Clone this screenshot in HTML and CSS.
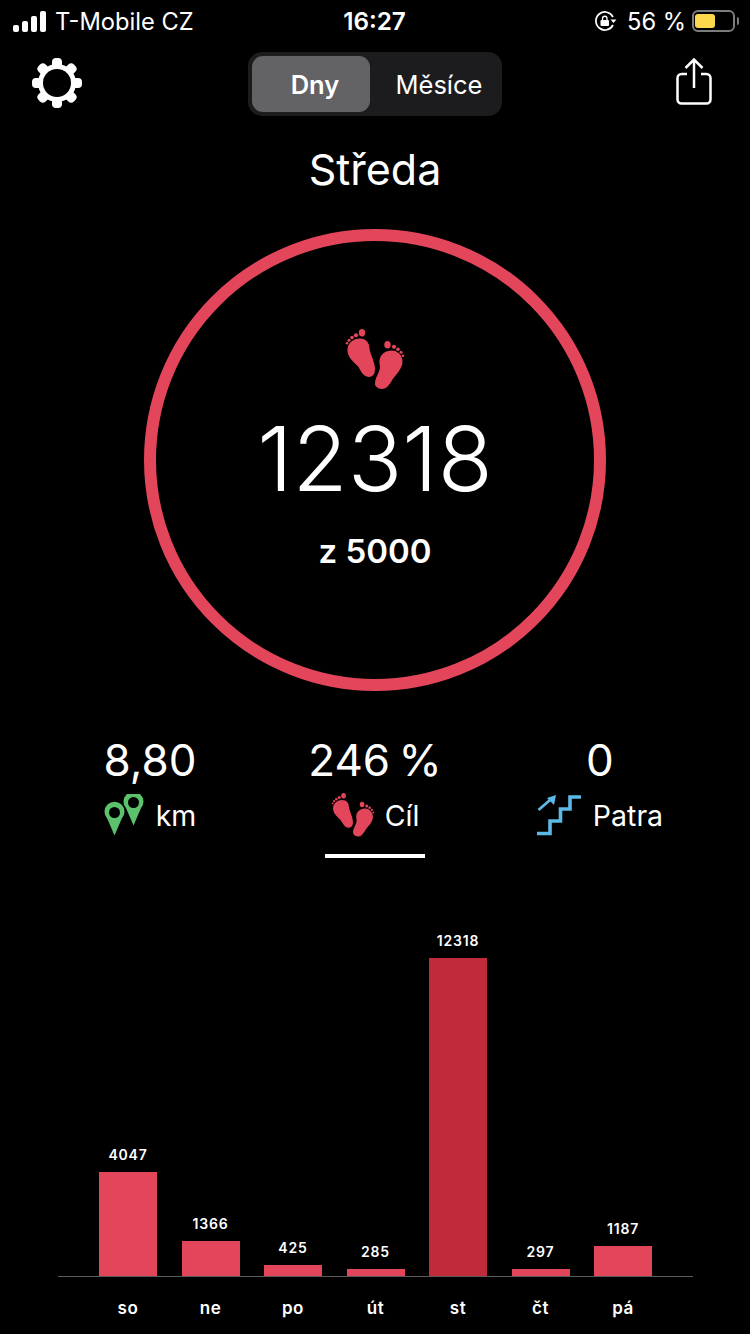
FILE: index.html
```html
<!DOCTYPE html>
<html lang="cs">
<head>
    <meta charset="UTF-8">
    <meta name="viewport" content="width=device-width, initial-scale=1.0">
    <title>Kroky</title>
    <link rel="stylesheet" href="styles.css">
</head>
<body>
    <svg class="defs" width="0" height="0">
        <symbol id="feet" viewBox="0 0 60 62">
            <g fill="#e3465b">
                <path stroke="#e3465b" stroke-width="4" stroke-linejoin="round" d="M4.500 22C4 15 10 11.500 15 11.500C20 11.500 22.500 15 22.500 20C23.500 27 28 33 28 40C28 44.500 26 46 23.500 46C20 46 18 42 15.500 37.500C12 32 5 30 4.500 22Z"/>
                <ellipse cx="17" cy="3.800" rx="3.200" ry="3.800"/>
                <circle cx="11" cy="6.300" r="2.100"/>
                <circle cx="7" cy="8.600" r="1.800"/>
                <circle cx="4" cy="11.300" r="1.500"/>
                <circle cx="2" cy="14.300" r="1.300"/>
                <path stroke="#e3465b" stroke-width="4" stroke-linejoin="round" d="M46.700 23.500C51.500 23.500 55.500 27.500 55.500 33.300C55.500 39 50 44 46 49C43.500 54 41 58 36.700 58C33.500 58 31.500 56 32 53C33 47 37.500 43 37 37C36 33 36 30 38 27.500C40 25 43 23.700 46.700 23.500Z"/>
                <ellipse cx="42.500" cy="15.800" rx="3.200" ry="3.800"/>
                <circle cx="49" cy="17.800" r="2.100"/>
                <circle cx="53" cy="20.300" r="1.800"/>
                <circle cx="56" cy="23.300" r="1.500"/>
                <circle cx="58" cy="26.800" r="1.300"/>
            </g>
        </symbol>
    </svg>

    <header class="status">
        <div class="status-left">
            <div class="signal"><i class="s1"></i><i class="s2"></i><i class="s3"></i><i class="s4"></i></div>
            <span>T-Mobile CZ</span>
        </div>
        <div class="status-time">16:27</div>
        <div class="status-right">
            <svg class="lock" width="22" height="20" viewBox="0 0 22 20">
                <path d="M18 6A9 9 0 1 0 18 14" fill="none" stroke="#fff" stroke-width="1.700"/>
                <path d="M15.500 8.500h6l-3 3.500z" fill="#fff"/>
                <rect x="5.500" y="9" width="8.500" height="6" rx="1" fill="#fff"/>
                <path d="M7.500 9.500V7.500a2.200 2.200 0 0 1 4.500 0V9.500" fill="none" stroke="#fff" stroke-width="1.300"/>
            </svg>
            <span class="pct">56 %</span>
            <div class="battery"><div class="battery-fill"></div></div>
            <div class="battery-cap"></div>
        </div>
    </header>

    <nav class="toolbar">
        <svg class="gear" width="52" height="52" viewBox="0 0 52 52">
            <g fill="#fff">
                <rect x="21" y="1" width="10" height="50" rx="4"/>
                <rect x="21" y="1" width="10" height="50" rx="4" transform="rotate(45 26 26)"/>
                <rect x="21" y="1" width="10" height="50" rx="4" transform="rotate(90 26 26)"/>
                <rect x="21" y="1" width="10" height="50" rx="4" transform="rotate(135 26 26)"/>
            </g>
            <circle cx="26" cy="26" r="19" fill="#fff"/>
            <circle cx="26" cy="26" r="14" fill="#000"/>
        </svg>
        <div class="segment">
            <div class="seg-item seg-active">Dny</div>
            <div class="seg-item seg-other">Měsíce</div>
        </div>
        <svg class="share" width="40" height="48" viewBox="0 0 40 48">
            <path d="M13 16H7.500A4 4 0 0 0 3.500 20V41.500A4 4 0 0 0 7.500 45.500H32.500A4 4 0 0 0 36.500 41.500V20A4 4 0 0 0 32.500 16H27" fill="none" stroke="#fff" stroke-width="2.500"/>
            <path d="M20 30V2M11.500 10L20 1.500L28.500 10" fill="none" stroke="#fff" stroke-width="2.500"/>
        </svg>
    </nav>

    <h1 class="day">Středa</h1>

    <section class="ring">
        <svg class="ring-feet" width="60" height="62"><use href="#feet"/></svg>
        <div class="ring-count">12318</div>
        <div class="ring-goal">z 5000</div>
    </section>

    <section class="stats">
        <div class="stat">
            <div class="stat-value">8,80</div>
            <div class="stat-label">
                <svg width="42" height="42" viewBox="0 0 42 42">
                    <path d="M10.500 41.500L3.200 24.500A10 10 0 1 1 17.800 24.500Z" fill="#5cc16c"/>
                    <circle cx="10.500" cy="18.500" r="5.500" fill="#000"/>
                    <path d="M29.500 31.500L22.200 14.500A10 10 0 1 1 36.800 14.500Z" fill="#5cc16c"/>
                    <circle cx="29.500" cy="8.500" r="5.500" fill="#000"/>
                </svg>
                <span>km</span>
            </div>
        </div>
        <div class="stat stat-selected">
            <div class="stat-value">246 %</div>
            <div class="stat-label">
                <svg width="44" height="45"><use href="#feet" width="44" height="45"/></svg>
                <span>Cíl</span>
            </div>
            <div class="stat-line"></div>
        </div>
        <div class="stat">
            <div class="stat-value">0</div>
            <div class="stat-label">
                <svg width="46" height="42" viewBox="0 0 46 42">
                    <path d="M0 39.500H13V27H23.500V15H33V3H44" fill="none" stroke="#5cb8e6" stroke-width="3.600"/>
                    <path d="M1.500 16L13 6" fill="none" stroke="#5cb8e6" stroke-width="2.800"/>
                    <path d="M10 4L19 1L17 11Z" fill="#5cb8e6"/>
                </svg>
                <span>Patra</span>
            </div>
        </div>
    </section>

    <section class="chart">
        <div class="bars">
            <div class="col"><span class="num">4047</span><div class="bar" style="height:104px"></div></div>
            <div class="col"><span class="num">1366</span><div class="bar" style="height:35px"></div></div>
            <div class="col"><span class="num">425</span><div class="bar" style="height:11px"></div></div>
            <div class="col"><span class="num">285</span><div class="bar" style="height:7px"></div></div>
            <div class="col"><span class="num">12318</span><div class="bar bar-today" style="height:318px"></div></div>
            <div class="col"><span class="num">297</span><div class="bar" style="height:7px"></div></div>
            <div class="col"><span class="num">1187</span><div class="bar" style="height:30px"></div></div>
        </div>
        <div class="days">
            <span>so</span><span>ne</span><span>po</span><span>út</span><span>st</span><span>čt</span><span>pá</span>
        </div>
    </section>
</body>
</html>
```

FILE: styles.css
```css
html, body {
    margin: 0;
    padding: 0;
    background: #000;
}
body {
    width: 750px;
    height: 1334px;
    overflow: hidden;
    color: #fff;
    font-family: Inter, "Noto Sans", sans-serif;
}
.defs {
    display: block;
    height: 0;
}
.status {
    display: grid;
    grid-template-columns: 1fr auto 1fr;
    align-items: center;
    height: 42px;
    padding: 0 11px 0 13px;
    font-size: 24px;
}
.status-left {
    display: flex;
    align-items: center;
    gap: 9px;
    font-size: 23.700px;
}
.signal {
    display: flex;
    align-items: flex-end;
    gap: 3px;
    height: 21px;
}
.signal i {
    display: block;
    width: 6px;
    background: #fff;
    border-radius: 2px;
}
.s1 { height: 7px; }
.s2 { height: 11px; }
.s3 { height: 16px; }
.s4 { height: 21px; }
.status-time {
    margin-right: 3px;
    font-size: 24.300px;
    font-weight: 600;
}
.status-right {
    display: flex;
    align-items: center;
    justify-content: flex-end;
}
.pct {
    margin: 0 6px 0 10px;
    font-size: 23.700px;
}
.battery {
    width: 43px;
    height: 22px;
    box-sizing: border-box;
    padding: 2px 1px;
    border: 2px solid #7c7c7c;
    border-radius: 6px;
}
.battery-fill {
    width: 20px;
    height: 100%;
    background: #fbd84c;
    border-radius: 3px;
}
.battery-cap {
    width: 2px;
    height: 8px;
    margin-left: 2px;
    background: #7c7c7c;
    border-radius: 0 2px 2px 0;
}
.toolbar {
    display: grid;
    grid-template-columns: 1fr auto 1fr;
    margin-top: 10px;
    padding: 0 36px 0 31px;
    height: 64px;
}
.gear {
    margin-top: 5px;
}
.share {
    justify-self: end;
    margin-top: 6px;
}
.segment {
    display: flex;
    width: 254px;
    height: 64px;
    box-sizing: border-box;
    padding: 4px;
    margin-left: 5px;
    background: #1c1c1e;
    border-radius: 14px;
}
.seg-item {
    display: flex;
    flex: 1;
    align-items: center;
    justify-content: center;
    font-size: 25.500px;
}
.seg-active {
    flex: 0 0 118px;
    box-sizing: border-box;
    padding-left: 8px;
    background: #636366;
    border-radius: 11px;
    font-weight: 600;
}
.seg-other {
    padding-left: 10px;
}
.day {
    margin: 23px 0 0;
    height: 60px;
    line-height: 60px;
    text-align: center;
    font-size: 43px;
    font-weight: 400;
}
.ring {
    display: flex;
    flex-direction: column;
    align-items: center;
    width: 462px;
    height: 462px;
    box-sizing: border-box;
    margin: 30px auto 0;
    padding-top: 88px;
    border: 12px solid #e3465b;
    border-radius: 50%;
}
.ring-count {
    margin-top: 20px;
    height: 96px;
    line-height: 96px;
    font-size: 90px;
    font-weight: 300;
}
.ring-goal {
    margin-top: 24px;
    font-size: 33px;
    font-weight: 600;
}
.stats {
    display: grid;
    grid-template-columns: 225px 225px 225px;
    justify-content: center;
    margin-top: 39px;
}
.stat {
    display: flex;
    flex-direction: column;
    align-items: center;
}
.stat-value {
    height: 60px;
    line-height: 60px;
    font-size: 44px;
    font-weight: 400;
    word-spacing: -4px;
}
.stat-label {
    display: flex;
    align-items: center;
    gap: 10px;
    height: 46px;
    margin-top: 2px;
    font-size: 28.500px;
}
.stat-line {
    width: 100px;
    height: 4px;
    margin-top: 16px;
    background: #fff;
}
.chart {
    margin: 73px 57px 0 58px;
}
.bars {
    display: flex;
    align-items: flex-end;
    height: 345px;
    padding-left: 41px;
    border-bottom: 1px solid #5a5a5e;
}
.col {
    display: flex;
    flex-direction: column;
    align-items: center;
    width: 58px;
    margin-right: 24.500px;
}
.num {
    margin-bottom: 9px;
    font-size: 14px;
    font-weight: 600;
    letter-spacing: 0.8px;
}
.bar {
    width: 58px;
    background: #e3465b;
}
.bar-today {
    background: #c12a3b;
}
.days {
    display: flex;
    padding: 21px 0 0 41px;
}
.days span {
    width: 58px;
    margin-right: 24.500px;
    text-align: center;
    font-size: 17px;
    font-weight: 600;
    letter-spacing: 0.6px;
}
```
